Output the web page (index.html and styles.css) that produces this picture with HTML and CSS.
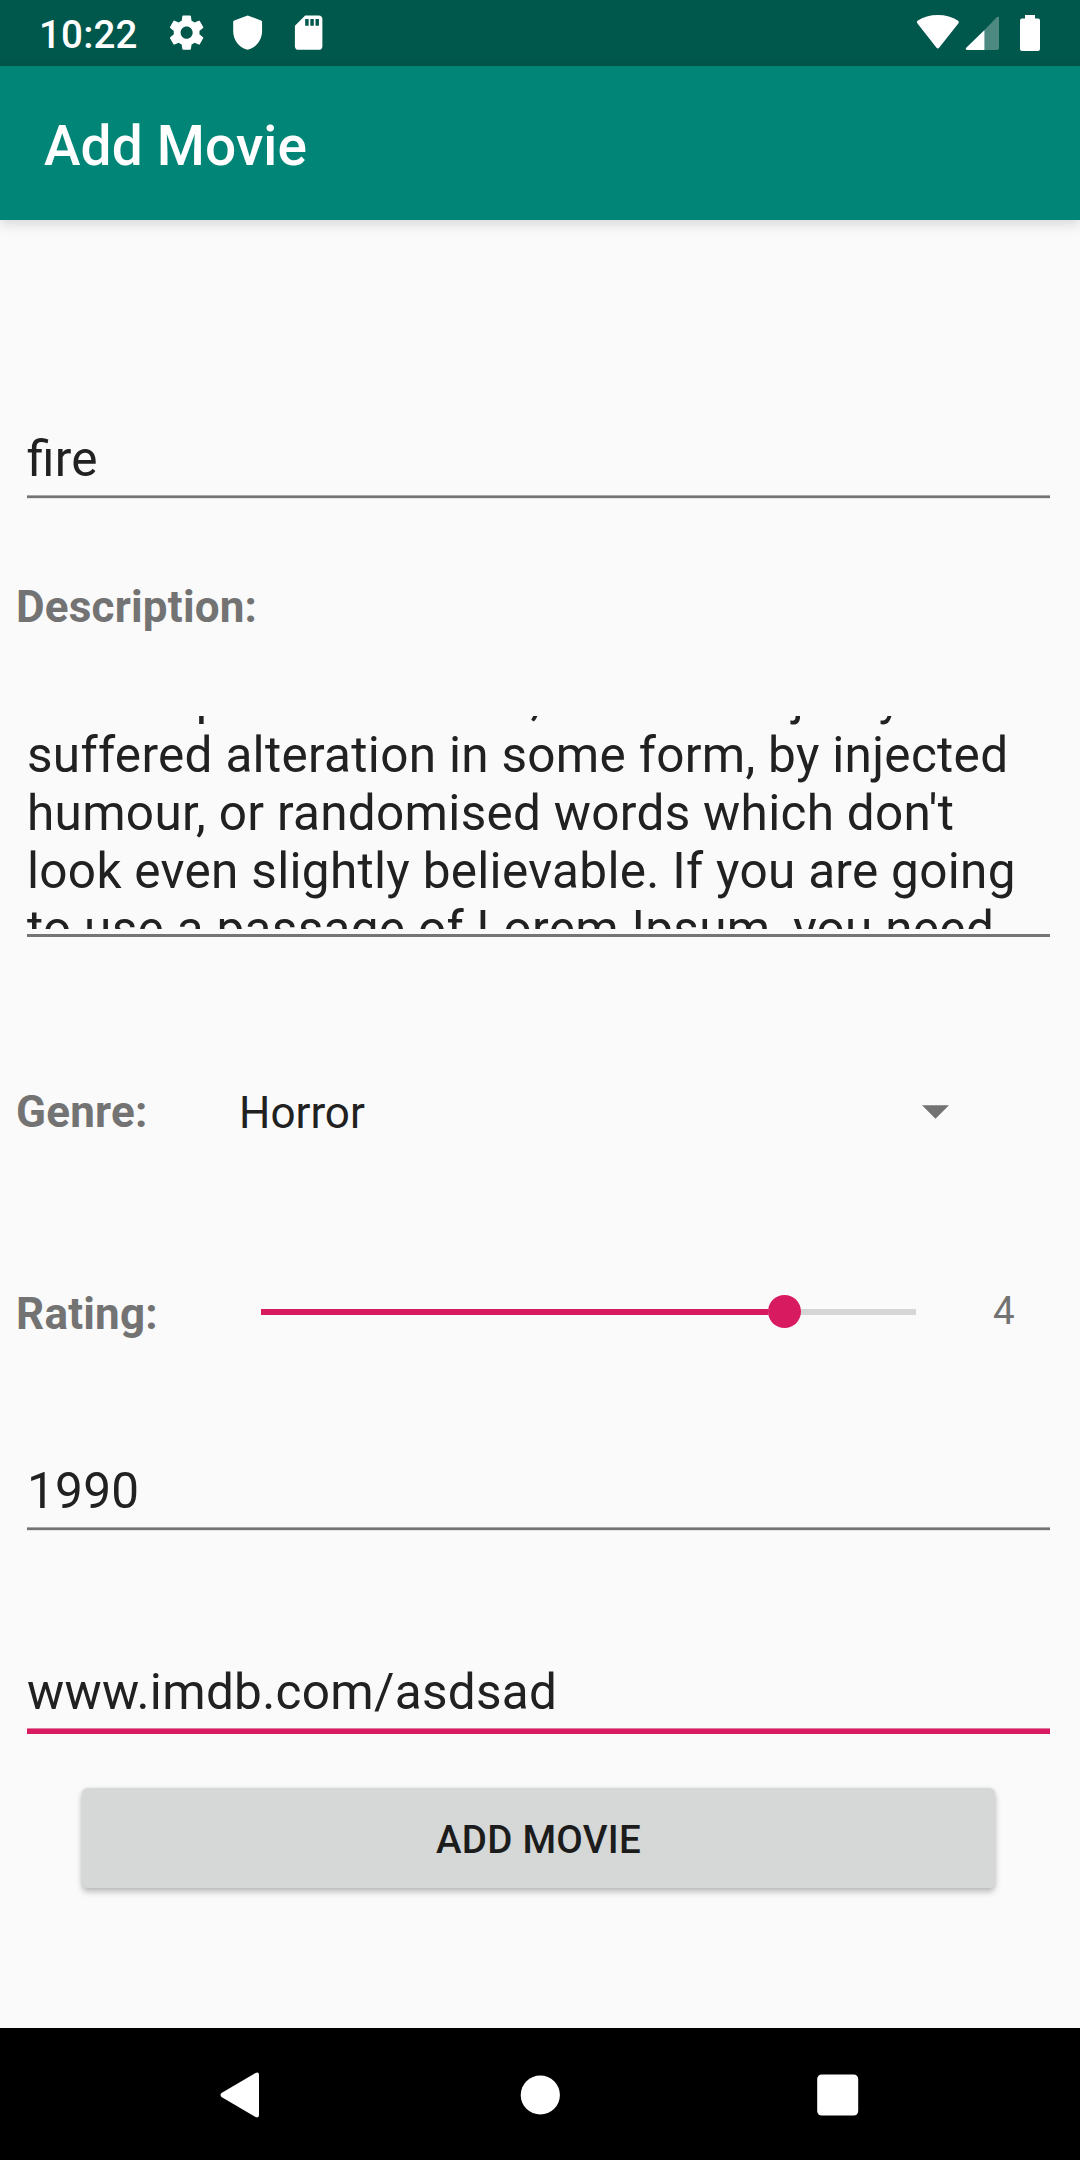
FILE: index.html
```html
<!DOCTYPE html>
<html lang="en">
<head>
<meta charset="utf-8">
<title>Add Movie</title>
<link rel="stylesheet" href="styles.css">
</head>
<body>
<div class="screen">
  <header class="status">
    <span class="clock">10:22</span>
    <svg class="notif" viewBox="0 0 24 24"><path d="M19.43 12.98c.04-.32.07-.64.07-.98s-.03-.66-.07-.98l2.11-1.65c.19-.15.24-.42.12-.64l-2-3.46c-.12-.22-.39-.3-.61-.22l-2.49 1c-.52-.4-1.08-.73-1.69-.98l-.38-2.65C14.46 2.18 14.25 2 14 2h-4c-.25 0-.46.18-.49.42l-.38 2.65c-.61.25-1.17.59-1.69.98l-2.49-1c-.23-.09-.49 0-.61.22l-2 3.46c-.13.22-.07.49.12.64l2.11 1.65c-.04.32-.07.65-.07.98s.03.66.07.98l-2.11 1.65c-.19.15-.24.42-.12.64l2 3.46c.12.22.39.3.61.22l2.49-1c.52.4 1.08.73 1.69.98l.38 2.65c.03.24.24.42.49.42h4c.25 0 .46-.18.49-.42l.38-2.65c.61-.25 1.17-.59 1.69-.98l2.49 1c.23.09.49 0 .61-.22l2-3.46c.12-.22.07-.49-.12-.64l-2.11-1.65zM12 15.5c-1.93 0-3.5-1.57-3.5-3.5s1.57-3.5 3.5-3.5 3.5 1.57 3.5 3.5-1.57 3.5-3.5 3.5z"/></svg>
    <svg class="notif" viewBox="0 0 24 24"><path d="M12 2L4.2 4.9Q3.6 5.1 3.6 5.7V11c0 5.2 3.3 9.6 8.4 11 5.1-1.4 8.4-5.8 8.4-11V5.7Q20.4 5.1 19.8 4.9z"/></svg>
    <svg class="notif" viewBox="0 0 24 24"><path d="M18 2h-8L4.02 8 4 20c0 1.1.9 2 2 2h12c1.1 0 2-.9 2-2V4c0-1.1-.9-2-2-2zm-6 6h-2V4h2v4zm3 0h-2V4h2v4zm3 0h-2V4h2v4z"/></svg>
    <svg class="system" viewBox="0 0 126 40"><path d="M1.5 10.5Q0 9 1.5 7.7Q10 2 21.800 2T42.200 7.7Q43.5 9 42.300 10.5L23.300 34.5Q21.800 36.300 20.300 34.5z"/><path class="faint" d="M68.5 17V37H81Q83 37 83 35V5Q83 3 81 4z"/><path d="M68.5 17V37H51.5Q48.5 36.5 50.5 34.5z"/><path d="M109 2h10v3.5h3q2 0 2 2V36q0 2-2 2h-16q-2 0-2-2V7.5q0-2 2-2h3z"/></svg>
  </header>
  <div class="toolbar"><h1 class="title">Add Movie</h1></div>
  <main class="form">
    <div class="field name"><div class="value">fire</div><div class="rule soft"></div></div>
    <div class="label">Description:</div>
    <div class="field description">
      <div class="viewport">
        <div class="lines">
          <div class="value">Lorem Ipsum available, but the majority have</div>
          <div class="value">suffered alteration in some form, by injected</div>
          <div class="value">humour, or randomised words which don't</div>
          <div class="value">look even slightly believable. If you are going</div>
          <div class="value">to use a passage of Lorem Ipsum, you need</div>
        </div>
      </div>
      <div class="rule"></div>
    </div>
    <div class="row genre">
      <div class="label">Genre:</div>
      <div class="choice">Horror</div>
      <svg class="caret" viewBox="0 0 28 14"><path d="M0 0H28L14 14z"/></svg>
    </div>
    <div class="row rating">
      <div class="label">Rating:</div>
      <div class="slider"><div class="progress"></div><div class="thumb"></div></div>
      <div class="score">4</div>
    </div>
    <div class="field year"><div class="value">1990</div><div class="rule soft"></div></div>
    <div class="field link"><div class="value">www.imdb.com/asdsad</div><div class="rule active"></div></div>
    <button class="submit">ADD MOVIE</button>
  </main>
  <nav class="navbar">
    <svg class="nav-icon" viewBox="0 0 60 60"><path d="M8.5 32Q6.500 30 8.5 28L42.500 8Q46 6.500 46 10V50Q46 53.500 42.500 52z"/></svg>
    <svg class="nav-icon" viewBox="0 0 60 60"><circle cx="30.3" cy="30" r="19.6"/></svg>
    <svg class="nav-icon" viewBox="0 0 60 60"><rect x="10.2" y="9.5" width="41" height="41" rx="4.5"/></svg>
  </nav>
</div>
</body>
</html>
```
FILE: styles.css
```css
* { box-sizing: border-box; }
body { margin: 0; font-family: Roboto, sans-serif; }
.screen {
  width: 1080px;
  height: 2160px;
  display: flex;
  flex-direction: column;
  background: #fafafa;
  color: #212121;
  overflow: hidden;
}
.status {
  height: 66px;
  flex: none;
  display: flex;
  align-items: center;
  padding: 0 38.5px 0 39px;
  background: #00574b;
  color: #fff;
}
.clock { width: 127px; font-size: 38.5px; font-weight: 500; line-height: 45px; padding-top: 2px; letter-spacing: .2px; }
.notif { width: 41.25px; height: 41.25px; margin-right: 19.7px; fill: #fff; }
.system { width: 126px; height: 40px; margin-left: auto; fill: #fff; }
.faint { opacity: .3; }
.toolbar {
  height: 154px;
  flex: none;
  display: flex;
  align-items: center;
  padding-left: 44px;
  background: #008577;
  color: #fff;
  box-shadow: 0 4px 12px rgba(0, 0, 0, .14);
}
.title { margin: 0; font-size: 55px; font-weight: 500; line-height: 64px; padding-top: 5px; letter-spacing: .15px; }
.form { flex: 1; display: flex; flex-direction: column; padding-left: 16px; }
.field { margin-left: 11px; width: 1023px; }
.value {
  font-size: 49.5px;
  line-height: 58px;
  white-space: nowrap;
  letter-spacing: .3px;
  font-feature-settings: "liga" 1;
}
.rule { height: 3px; background: #757575; }
.soft {
  height: 4px;
  margin-top: 7px;
  background: linear-gradient(#a8a8a8 1px, #737373 1px 3px, #e6e6e6 3px);
}
.active {
  height: 6px;
  margin-top: 7px;
  background: linear-gradient(#e27ba2 1px, #d81b60 1px);
}
.label { font-size: 44px; font-weight: 700; line-height: 52px; color: #737373; letter-spacing: .2px; }
.name { margin-top: 210px; }
.name + .label { margin-top: 82px; }
.description { margin-top: 83px; }
.viewport { height: 213px; margin-bottom: 5px; overflow: hidden; }
.lines { margin-top: -48px; }
.row { height: 56px; display: flex; align-items: flex-start; }
.row .label { flex: none; }
.genre { margin-top: 148px; padding-top: 1px; }
.genre .label { width: 223px; }
.choice { width: 683px; font-size: 44px; line-height: 52px; padding-top: 1px; }
.caret { width: 27px; height: 14px; margin-top: 19px; fill: #737373; }
.rating { margin-top: 147px; }
.rating .label { width: 245px; }
.slider {
  width: 655px;
  height: 33px;
  margin-top: 7px;
  display: flex;
  align-items: center;
  background: linear-gradient(#d6d6d6, #d6d6d6) center / 100% 6px no-repeat;
}
.progress { width: 507px; height: 6px; background: #d81b60; }
.thumb { width: 33px; height: 33px; border-radius: 50%; background: #d81b60; }
.score { margin-left: 77px; font-size: 38.5px; line-height: 45px; color: #737373; }
.year { margin-top: 118px; }
.link { margin-top: 132px; }
.submit {
  width: 913px;
  height: 100px;
  margin: 54px 0 0 66px;
  padding: 2px 0 0;
  border: 0;
  border-radius: 5.5px;
  background: #d6d8d7;
  color: #1c1c1c;
  font: 500 38.5px/45px Roboto, sans-serif;
  letter-spacing: .25px;
  box-shadow: 0 4px 6px rgba(0, 0, 0, .24), 0 0 4px rgba(0, 0, 0, .08);
}
.navbar {
  height: 132px;
  flex: none;
  display: flex;
  align-items: center;
  justify-content: center;
  gap: 237px;
  padding-top: 1px;
  background: #000;
}
.nav-icon { width: 60px; height: 60px; fill: #fff; }
```
